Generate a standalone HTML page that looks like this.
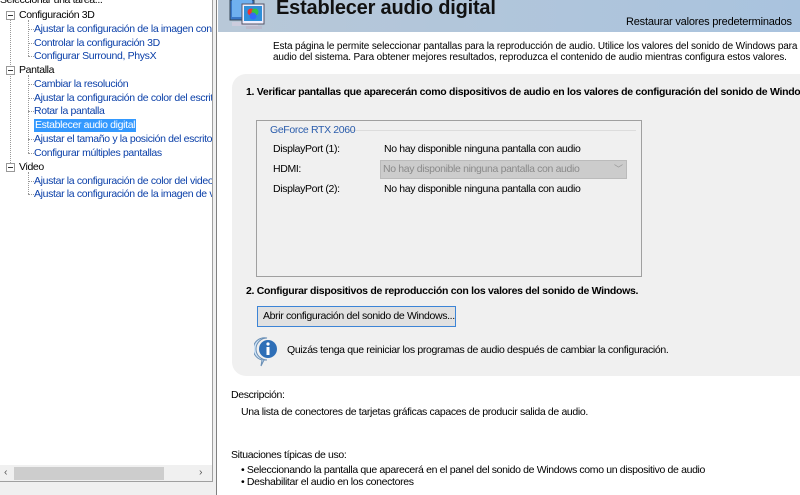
<!DOCTYPE html>
<html><head><meta charset="utf-8"><style>
*{margin:0;padding:0;box-sizing:border-box}
html,body{width:800px;height:495px;overflow:hidden}
body{background:#fff;font-family:"Liberation Sans",sans-serif;font-size:10.5px;letter-spacing:-0.35px;color:#000;position:relative}
.a{position:absolute;white-space:nowrap}
#left{position:absolute;left:0;top:0;width:213px;height:482px;background:#fff;border-right:1px solid #a0a0a0;border-bottom:1px solid #a0a0a0;overflow:hidden}
#leftbot{position:absolute;left:0;top:482px;width:214px;height:13px;background:#f0f0f0}
#div{position:absolute;left:213px;top:0;width:4px;height:495px;background:#f0f0f0;border-right:1px solid #808080}
.tl{color:#0a3fa8}
.dot{position:absolute;border-left:1px dotted #999}
.hd{position:absolute;border-top:1px dotted #999}
.box{position:absolute;width:9px;height:9px;border:1px solid #999;background:#fff}
.box:after{content:"";position:absolute;left:1px;top:3px;width:5px;height:1px;background:#333}
#hdr{position:absolute;left:218px;top:0;width:582px;height:32px;background:linear-gradient(90deg,#b8c8d8,#a9c3de)}
#panel{position:absolute;left:232px;top:74px;width:568px;height:302px;background:#f0f0f0;border-radius:14px 0 0 14px}
.b{font-weight:bold;font-size:10.5px;letter-spacing:-0.3px}
</style></head><body>
<div id="left">
<div class="a" style="left:0;top:-6px">Seleccionar una tarea...</div>
<div class="dot" style="left:10px;top:19px;height:150px"></div>
<div class="box" style="left:6px;top:11px"></div><div class="a" style="left:19px;top:9px">Configuración 3D</div>
<div class="dot" style="left:28px;top:20px;height:36px"></div>
<div class="hd" style="left:28px;top:29px;width:6px"></div><div class="a tl" style="left:34px;top:23px">Ajustar la configuración de la imagen con v</div>
<div class="hd" style="left:28px;top:43px;width:6px"></div><div class="a tl" style="left:34px;top:37px">Controlar la configuración 3D</div>
<div class="hd" style="left:28px;top:56px;width:6px"></div><div class="a tl" style="left:34px;top:50px">Configurar Surround, PhysX</div>
<div class="box" style="left:6px;top:66px"></div><div class="a" style="left:19px;top:64px">Pantalla</div>
<div class="dot" style="left:28px;top:75px;height:78px"></div>
<div class="hd" style="left:28px;top:84px;width:6px"></div><div class="a tl" style="left:34px;top:78px">Cambiar la resolución</div>
<div class="hd" style="left:28px;top:98px;width:6px"></div><div class="a tl" style="left:34px;top:92px">Ajustar la configuración de color del escrito</div>
<div class="hd" style="left:28px;top:111px;width:6px"></div><div class="a tl" style="left:34px;top:105px">Rotar la pantalla</div>
<div class="a" style="left:34px;top:119px;background:#3399ff;color:#fff;padding:0 1px;height:13px;line-height:13px">Establecer audio digital</div>
<div class="hd" style="left:28px;top:139px;width:6px"></div><div class="a tl" style="left:34px;top:133px">Ajustar el tamaño y la posición del escritori</div>
<div class="hd" style="left:28px;top:153px;width:6px"></div><div class="a tl" style="left:34px;top:147px">Configurar múltiples pantallas</div>
<div class="box" style="left:6px;top:163px"></div><div class="a" style="left:19px;top:161px">Video</div>
<div class="dot" style="left:28px;top:172px;height:22px"></div>
<div class="hd" style="left:28px;top:181px;width:6px"></div><div class="a tl" style="left:34px;top:175px">Ajustar la configuración de color del video</div>
<div class="hd" style="left:28px;top:194px;width:6px"></div><div class="a tl" style="left:34px;top:188px">Ajustar la configuración de la imagen de víc</div>
<div style="position:absolute;left:0;top:465px;width:212px;height:17px;background:#f0f0f0"></div>
<div style="position:absolute;left:14px;top:467px;width:150px;height:13px;background:#cdcdcd"></div>
<div class="a" style="left:4px;top:466px;color:#555">‹</div><div class="a" style="left:199px;top:466px;color:#555">›</div>
</div>
<div id="leftbot"></div>
<div id="div"></div>
<div id="hdr"></div>
<svg class="a" style="left:228px;top:0" width="40" height="32" viewBox="0 0 40 32">
<rect x="2" y="0" width="24" height="20" fill="#3a78c8" stroke="#345" stroke-width="1"/>
<rect x="4" y="0" width="20" height="17" fill="#6fb0ef"/>
<rect x="4" y="22" width="26" height="4" fill="#ccd"/>
<rect x="14" y="4" width="22" height="20" fill="#eef" stroke="#556"/>
<rect x="16" y="6" width="18" height="15" fill="#2f8fd8"/>
<circle cx="23" cy="12" r="3.5" fill="#e33"/><circle cx="27" cy="12" r="3.5" fill="#3c3" opacity=".9"/><circle cx="25" cy="16" r="3.5" fill="#36f" opacity=".9"/>
<rect x="18" y="26" width="16" height="3" fill="#bbc"/>
</svg>
<div class="a" style="left:276px;top:-3px;font-size:20px;font-weight:bold;letter-spacing:-0.2px;color:#111">Establecer audio digital</div>
<div class="a" style="left:626px;top:16px;font-size:11px;letter-spacing:-0.2px">Restaurar valores predeterminados</div>
<div class="a" style="left:273px;top:41px;font-size:10px;letter-spacing:-0.15px">Esta página le permite seleccionar pantallas para la reproducción de audio. Utilice los valores del sonido de Windows para configu</div>
<div class="a" style="left:273px;top:52px;font-size:10px;letter-spacing:-0.15px">audio del sistema. Para obtener mejores resultados, reproduzca el contenido de audio mientras configura estos valores.</div>
<div id="panel"></div>
<div class="a b" style="left:246px;top:86px">1. Verificar pantallas que aparecerán como dispositivos de audio en los valores de configuración del sonido de Windo</div>
<div style="position:absolute;left:256px;top:120px;width:386px;height:157px;border:1px solid #a0a0a0;background:#f0f0f0"></div>
<div style="position:absolute;left:350px;top:130px;width:286px;border-top:1px solid #dcdcdc"></div>
<div class="a" style="left:270px;top:124px;color:#2a5cab">GeForce RTX 2060</div>
<div class="a" style="left:273px;top:143px">DisplayPort (1):</div>
<div class="a" style="left:384px;top:143px">No hay disponible ninguna pantalla con audio</div>
<div class="a" style="left:273px;top:163px">HDMI:</div>
<div style="position:absolute;left:380px;top:160px;width:247px;height:19px;background:#cccccc;border:1px solid #bbb"></div>
<div class="a" style="left:383px;top:163px;color:#8a8a8a">No hay disponible ninguna pantalla con audio</div>
<div class="a" style="left:614px;top:162px;color:#999;font-size:9px">﹀</div>
<div class="a" style="left:273px;top:183px">DisplayPort (2):</div>
<div class="a" style="left:384px;top:183px">No hay disponible ninguna pantalla con audio</div>
<div class="a b" style="left:246px;top:285px">2. Configurar dispositivos de reproducción con los valores del sonido de Windows.</div>
<div style="position:absolute;left:257px;top:306px;width:199px;height:21px;background:#e1e1e1;border:1px solid #3c84d6"></div>
<div class="a" style="left:263px;top:310px">Abrir configuración del sonido de Windows...</div>
<svg class="a" style="left:254px;top:337px" width="28" height="30" viewBox="0 0 28 30"><path d="M13 1a11 11 0 1 0 0 22h-3l-3 6 1-6a11 11 0 0 1 5-22z" fill="#cfe3f6" stroke="#6a8fb5"/><circle cx="14" cy="12" r="9" fill="#2e6fb7"/><rect x="12.5" y="10" width="3" height="8" fill="#fff"/><circle cx="14" cy="7" r="1.6" fill="#fff"/></svg>
<div class="a" style="left:287px;top:344px">Quizás tenga que reiniciar los programas de audio después de cambiar la configuración.</div>
<div class="a" style="left:231px;top:389px">Descripción:</div>
<div class="a" style="left:241px;top:406px">Una lista de conectores de tarjetas gráficas capaces de producir salida de audio.</div>
<div class="a" style="left:231px;top:449px">Situaciones típicas de uso:</div>
<div class="a" style="left:241px;top:464px">• Seleccionando la pantalla que aparecerá en el panel del sonido de Windows como un dispositivo de audio</div>
<div class="a" style="left:241px;top:476px">• Deshabilitar el audio en los conectores</div>
</body></html>
